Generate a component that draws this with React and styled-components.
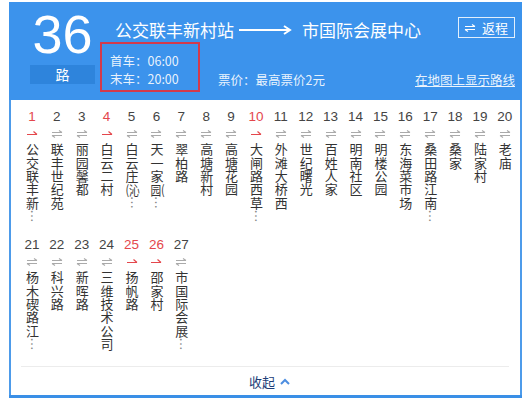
import React from 'react';
import styled, { createGlobalStyle } from 'styled-components';

const GlobalStyle = createGlobalStyle`
  html, body { margin: 0; padding: 0; background: #fff; }
  body { font-family: "Liberation Sans", "Noto Sans CJK SC", sans-serif; }
`;

const stations = [
  { name: '公交联丰新', more: true, oneWay: true },
  { name: '联丰世纪苑' },
  { name: '丽园馨都' },
  { name: '白云二村', oneWay: true },
  { name: '白云庄', tail: '(沁', more: true },
  { name: '天一家', tail: '园(', more: true },
  { name: '翠柏路' },
  { name: '高塘新村' },
  { name: '高塘花园' },
  { name: '大闸路西草', more: true, oneWay: true },
  { name: '外滩大桥西' },
  { name: '世纪曙光' },
  { name: '百姓人家' },
  { name: '明南社区' },
  { name: '明楼公园' },
  { name: '东海菜市场' },
  { name: '桑田路江南', more: true },
  { name: '桑家' },
  { name: '陆家村' },
  { name: '老庙' },
  { name: '杨木碶路江', more: true },
  { name: '科兴路' },
  { name: '新晖路' },
  { name: '三维技术公司' },
  { name: '扬帆路', oneWay: true },
  { name: '邵家村', oneWay: true },
  { name: '市国际会展', more: true },
];

const Card = styled.div`
  margin: 2px 0 0 9px;
  width: 513px;
  box-sizing: border-box;
  border-bottom: 3px solid #3a8fe6;
`;

const Header = styled.div`
  display: flex;
  height: 98px;
  box-sizing: border-box;
  padding: 4px 7px 0 21px;
  background: #3c93ec;
  color: #fff;
`;

const LineBlock = styled.div`
  width: 65px;
  display: flex;
  flex-direction: column;
  align-items: center;
`;

const LineNumber = styled.div`
  font-family: "Liberation Sans", sans-serif;
  font-size: 54px;
  line-height: 54px;
  height: 57.5px;
  margin-top: 1.3px;
`;

const LineUnit = styled.div`
  width: 65px;
  height: 19px;
  line-height: 19px;
  text-align: center;
  background: #2e84dc;
  font-family: "Noto Sans CJK SC", sans-serif;
  font-size: 14px;
`;

const Info = styled.div`
  flex: 1;
  margin-left: 5px;
  display: flex;
  flex-direction: column;
`;

const TopRow = styled.div`
  display: flex;
  height: 36px;
`;

const Terminal = styled.span`
  font-family: "Noto Sans CJK SC", sans-serif;
  font-size: 17px;
  line-height: 24px;
  margin-top: 12px;
  margin-left: ${p => p.$first ? '15px' : '0'};
`;

const RouteArrow = styled.svg`
  margin: 19px 10px 0 5px;
  width: 53px;
  height: 10px;
`;

const ReturnButton = styled.div`
  margin: 11px 0 0 auto;
  height: 21px;
  box-sizing: border-box;
  display: flex;
  align-items: center;
  gap: 6px;
  padding: 0 6px 0 5px;
  border: 1px solid rgba(255, 255, 255, 0.85);
  font-family: "Noto Sans CJK SC", sans-serif;
  font-size: 13px;
`;

const BottomRow = styled.div`
  display: flex;
  align-items: flex-end;
  height: 50px;
  font-family: "Noto Sans CJK SC", sans-serif;
  color: rgba(255, 255, 255, 0.9);
`;

const TimeBox = styled.div`
  width: 100px;
  height: 50px;
  box-sizing: border-box;
  border: 2px solid #d23a4c;
  padding: 8px 0 0 8px;
  font-size: 12.5px;
  line-height: 18px;
`;

const Fare = styled.span`
  margin: 0 0 3px 18px;
  font-size: 12.5px;
  line-height: 18px;
`;

const MapLink = styled.span`
  margin: 0 0 3px auto;
  font-size: 12.5px;
  line-height: 18px;
  text-decoration: underline;
`;

const Body = styled.div`
  border-left: 2px solid #4d9bea;
  border-right: 2px solid #4d9bea;
  background: #fff;
`;

const StationList = styled.div`
  display: flex;
  flex-wrap: wrap;
  padding: 10px 0 0 8.5px;
`;

const Station = styled.div`
  width: 24.9px;
  height: 113px;
  margin-bottom: 15px;
  display: flex;
  flex-direction: column;
  align-items: center;
`;

const StationNo = styled.div`
  font-family: "Liberation Sans", sans-serif;
  font-size: 13.5px;
  line-height: 14px;
  color: ${p => p.$red ? '#e4474c' : '#444'};
`;

const ArrowWrap = styled.div`
  height: 19px;
  display: flex;
  align-items: center;
`;

const StationName = styled.div`
  writing-mode: vertical-rl;
  font-family: "Noto Sans CJK SC", sans-serif;
  font-size: 13px;
  line-height: 16px;
  letter-spacing: 0.3px;
  color: #333;
  white-space: nowrap;
`;

const Combined = styled.span`
  text-combine-upright: all;
`;

const Ellipsis = styled.span`
  color: #888;
`;

const Divider = styled.div`
  height: 1px;
  margin: 0 11px 0 10px;
  background: #ececec;
`;

const Footer = styled.div`
  height: 28px;
  display: flex;
  align-items: center;
  justify-content: center;
  gap: 5px;
  padding-left: 8px;
  font-family: "Noto Sans CJK SC", sans-serif;
  font-size: 13px;
  color: #1d3e78;
`;

const OneWayIcon = () => (
  <svg width="12" height="7" viewBox="0 0 12 7">
    <path d="M1 4.5H11M7.5 1.5L11 4.5" stroke="#e4474c" strokeWidth="1.2" fill="none" />
  </svg>
);

const TwoWayIcon = ({ color = '#aaa' }) => (
  <svg width="12" height="8" viewBox="0 0 12 8">
    <path d="M1 2.5H11M8 0.5L11 2.5M1 5.5H11M1 5.5L4 7.5" stroke={color} strokeWidth="1.1" fill="none" />
  </svg>
);

const App = () => (
  <>
    <GlobalStyle />
    <Card>
      <Header>
        <LineBlock>
          <LineNumber>36</LineNumber>
          <LineUnit>路</LineUnit>
        </LineBlock>
        <Info>
          <TopRow>
            <Terminal $first>公交联丰新村站</Terminal>
            <RouteArrow viewBox="0 0 53 10">
              <path d="M0 5H50M45 1L51 5L45 9" stroke="#fff" strokeWidth="2" fill="none" />
            </RouteArrow>
            <Terminal>市国际会展中心</Terminal>
            <ReturnButton>
              <TwoWayIcon color="#fff" />
              返程
            </ReturnButton>
          </TopRow>
          <BottomRow>
            <TimeBox>
              <div>首车：06:00</div>
              <div>末车：20:00</div>
            </TimeBox>
            <Fare>票价：最高票价2元</Fare>
            <MapLink>在地图上显示路线</MapLink>
          </BottomRow>
        </Info>
      </Header>
      <Body>
        <StationList>
          {stations.map((s, i) => (
            <Station key={i}>
              <StationNo $red={s.oneWay}>{i + 1}</StationNo>
              <ArrowWrap>{s.oneWay ? <OneWayIcon /> : <TwoWayIcon />}</ArrowWrap>
              <StationName>
                {s.name}
                {s.tail && <Combined>{s.tail}</Combined>}
                {s.more && <Ellipsis>…</Ellipsis>}
              </StationName>
            </Station>
          ))}
        </StationList>
        <Divider />
        <Footer>
          收起
          <svg width="10" height="7" viewBox="0 0 10 7">
            <path d="M1 6L5 2L9 6" stroke="#4d8ee0" strokeWidth="2" fill="none" />
          </svg>
        </Footer>
      </Body>
    </Card>
  </>
);

export default App;
